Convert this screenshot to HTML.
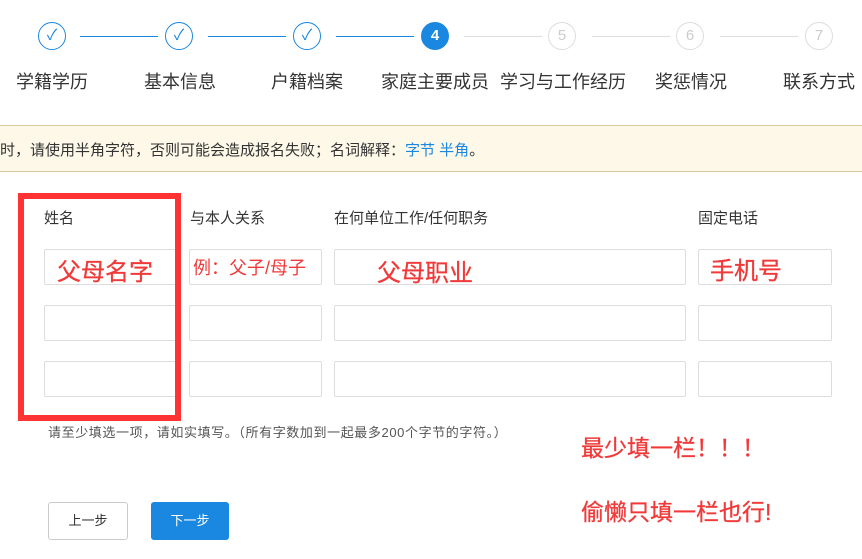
<!DOCTYPE html>
<html><head><meta charset="utf-8"><style>
*{margin:0;padding:0;box-sizing:border-box}
body{width:862px;height:559px;background:#fff;position:relative;overflow:hidden;font-family:"Liberation Sans","Noto Sans CJK SC",sans-serif;color:#333}
.a{position:absolute;white-space:nowrap}
.c{position:absolute;top:22px;width:28px;height:28px;border-radius:50%;border:1px solid #1a87e0;color:#1a87e0;text-align:center;line-height:26px;font-size:15px}
.c.g{border-color:#ddd;color:#ccc}
.c.f{background:#1a87e0;color:#fff;font-weight:bold}
.l{position:absolute;top:36px;height:1px;background:#1a87e0}
.l.g{background:#ddd}
.lb{position:absolute;top:68px;font-size:18px;color:#333;white-space:nowrap}
.in{position:absolute;height:36px;border:1px solid #ddd;border-radius:2px}
.h{position:absolute;top:207px;font-size:15px;color:#333}
.r{position:absolute;color:#f03a3a;white-space:nowrap;font-weight:normal;-webkit-text-stroke:0.3px #f03a3a}
</style></head><body>
<div class="c" style="left:38px">✓</div>
<div class="c" style="left:165px">✓</div>
<div class="c" style="left:293px">✓</div>
<div class="c f" style="left:421px">4</div>
<div class="c g" style="left:548px">5</div>
<div class="c g" style="left:676px">6</div>
<div class="c g" style="left:805px">7</div>
<div class="l" style="left:80px;width:78px"></div>
<div class="l" style="left:208px;width:78px"></div>
<div class="l" style="left:336px;width:78px"></div>
<div class="l g" style="left:464px;width:78px"></div>
<div class="l g" style="left:592px;width:78px"></div>
<div class="l g" style="left:720px;width:78px"></div>
<div class="lb" style="left:16px">学籍学历</div>
<div class="lb" style="left:144px">基本信息</div>
<div class="lb" style="left:271px">户籍档案</div>
<div class="lb" style="left:381px">家庭主要成员</div>
<div class="lb" style="left:500px">学习与工作经历</div>
<div class="lb" style="left:655px">奖惩情况</div>
<div class="lb" style="left:783px">联系方式</div>
<div class="a" style="left:0;top:125px;width:862px;height:47px;background:#fdf8e8;border-top:1px solid #dccb9c;border-bottom:1px solid #dccb9c"></div>
<div class="a" style="left:0;top:139px;font-size:15px;color:#333">时，请使用半角字符，否则可能会造成报名失败；名词解释：<span style="color:#1a87e0">字节 半角</span>。</div>
<div class="h" style="left:44px">姓名</div>
<div class="h" style="left:190px">与本人关系</div>
<div class="h" style="left:334px">在何单位工作/任何职务</div>
<div class="h" style="left:698px">固定电话</div>
<div class="in" style="left:44px;top:249px;width:136px"></div>
<div class="in" style="left:189px;top:249px;width:133px"></div>
<div class="in" style="left:334px;top:249px;width:352px"></div>
<div class="in" style="left:698px;top:249px;width:134px"></div>
<div class="in" style="left:44px;top:305px;width:136px"></div>
<div class="in" style="left:189px;top:305px;width:133px"></div>
<div class="in" style="left:334px;top:305px;width:352px"></div>
<div class="in" style="left:698px;top:305px;width:134px"></div>
<div class="in" style="left:44px;top:361px;width:136px"></div>
<div class="in" style="left:189px;top:361px;width:133px"></div>
<div class="in" style="left:334px;top:361px;width:352px"></div>
<div class="in" style="left:698px;top:361px;width:134px"></div>
<div class="a" style="left:18px;top:193px;width:163px;height:228px;border:6px solid #f33"></div>
<div class="r" style="left:57px;top:252px;font-size:24px">父母名字</div>
<div class="r" style="left:193px;top:254px;font-size:18px;-webkit-text-stroke:0">例：父子/母子</div>
<div class="r" style="left:377px;top:253px;font-size:24px">父母职业</div>
<div class="r" style="left:710px;top:251px;font-size:24px">手机号</div>
<div class="a" style="left:48px;top:422px;font-size:13px;color:#555;letter-spacing:0.6px">请至少填选一项，请如实填写。（所有字数加到一起最多200个字节的字符。）</div>
<div class="r" style="left:581px;top:429px;font-size:23px">最少填一栏！！！</div>
<div class="r" style="left:581px;top:493px;font-size:23px">偷懒只填一栏也行!</div>
<div class="a" style="left:48px;top:502px;width:80px;height:38px;border:1px solid #ccc;border-radius:3px;font-size:13px;text-align:center;line-height:36px;color:#333">上一步</div>
<div class="a" style="left:151px;top:502px;width:78px;height:38px;background:#1a87e0;border-radius:3px;font-size:13px;text-align:center;line-height:38px;color:#fff">下一步</div>
</body></html>
